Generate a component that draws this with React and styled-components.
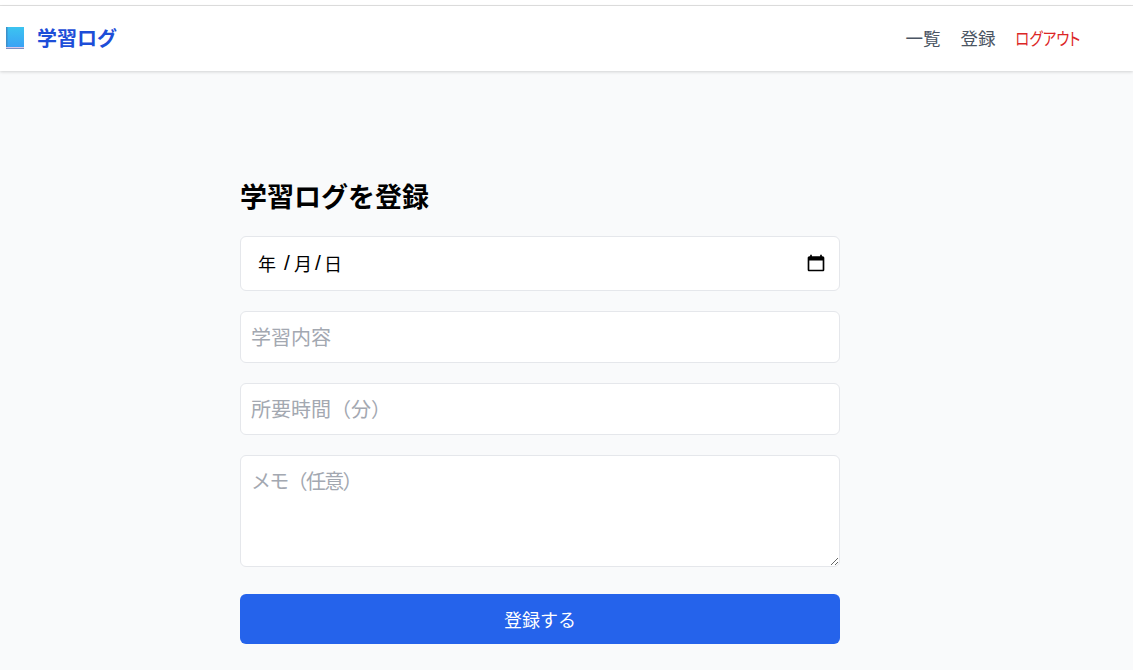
import React from 'react';
import styled, { createGlobalStyle } from 'styled-components';

const FONT = `"Noto Sans CJK JP", "Noto Sans", sans-serif`;

const GlobalStyle = createGlobalStyle`
  html, body {
    margin: 0;
    padding: 0;
    background-color: #f9fafb;
    font-family: ${FONT};
  }
  * {
    box-sizing: border-box;
  }
`;

const Page = styled.div`
  width: 1133px;
  height: 670px;
  overflow: hidden;
  display: flex;
  flex-direction: column;
  background-color: #f9fafb;
`;

const TopStrip = styled.div`
  height: 6px;
  flex-shrink: 0;
  background-color: #fff;
  border-bottom: 1px solid #e2e2e2;
`;

const Header = styled.header`
  height: 65px;
  flex-shrink: 0;
  display: flex;
  align-items: center;
  justify-content: space-between;
  padding: 0 53px 0 6px;
  background-color: #fff;
  box-shadow: 0 1px 3px rgba(0, 0, 0, 0.16);
`;

const Brand = styled.div`
  display: flex;
  align-items: center;
  gap: 13px;
  margin-top: -2px;
  font-size: 20px;
  font-weight: 700;
  line-height: 28px;
  color: #1d4ed8;
`;

const Nav = styled.nav`
  display: flex;
  align-items: center;
  gap: 20px;
  margin-top: -2px;
`;

const NavLink = styled.a`
  font-size: 17.5px;
  line-height: 24px;
  color: #4b5563;
`;

/* the katakana sit much tighter in the reference font, so squeeze this one */
const LogoutLink = styled(NavLink)`
  display: inline-block;
  margin-left: -14px;
  color: #dc2626;
  font-feature-settings: "palt";
  transform: scaleX(0.83);
  transform-origin: right center;
`;

const Content = styled.div`
  padding-right: 53px;
`;

const Main = styled.main`
  width: 600px;
  margin: 0 auto;
  padding-top: 105px;
  display: flex;
  flex-direction: column;
`;

const Title = styled.h1`
  margin: 0 0 20px;
  font-size: 27px;
  line-height: 40px;
  font-weight: 700;
  color: #000;
`;

const Form = styled.form`
  display: flex;
  flex-direction: column;
  gap: 20px;
`;

const DateField = styled.div`
  height: 55px;
  display: flex;
  align-items: center;
  justify-content: space-between;
  padding: 0 13px 2px 17px;
  background-color: #fff;
  border: 1px solid #e5e7eb;
  border-radius: 6px;
  font-size: 18px;
  color: #000;
`;

const DateParts = styled.div`
  display: flex;
  align-items: center;
`;

const DateSep = styled.span`
  width: ${({ $wide }) => ($wide ? '18px' : '12px')};
  padding-left: ${({ $wide }) => ($wide ? '8px' : '3px')};
  font-family: "Liberation Sans", sans-serif;
  font-size: 21px;
  line-height: 24px;
`;

const TextInput = styled.input`
  height: 52px;
  padding: 0 10px 2px;
  background-color: #fff;
  border: 1px solid #e5e7eb;
  border-radius: 6px;
  outline: none;
  font-family: ${FONT};
  font-size: 20px;
  color: #111;

  &::placeholder {
    color: #a3a8b1;
  }
`;

const TextArea = styled.textarea`
  height: 112px;
  padding: 11px 10px;
  background-color: #fff;
  border: 1px solid #e5e7eb;
  border-radius: 6px;
  outline: none;
  resize: vertical;
  font-family: ${FONT};
  font-size: 20px;
  line-height: 28px;
  color: #111;

  &::placeholder {
    color: #a3a8b1;
    letter-spacing: -1.7px;
  }
`;

const SubmitButton = styled.button`
  height: 50px;
  margin-top: 7px;
  background-color: #2563eb;
  border: none;
  border-radius: 6px;
  color: #fff;
  font-family: ${FONT};
  font-size: 18px;
`;

const BookIcon = () => (
  <svg width="18" height="22" viewBox="0 0 18 22" aria-hidden="true">
    <defs>
      <linearGradient id="bookCover" x1="0" y1="0" x2="0" y2="1">
        <stop offset="0" stopColor="#3cc4f0" />
        <stop offset="1" stopColor="#3aa2f5" />
      </linearGradient>
    </defs>
    <rect x="0" y="0" width="18" height="20" fill="url(#bookCover)" />
    <rect x="0" y="0" width="1.5" height="20" fill="#3d8fc9" />
    <rect x="0" y="20" width="18" height="1" fill="#d9c8ea" />
    <rect x="0" y="21" width="18" height="1" fill="#7f8fc0" />
  </svg>
);

const CalendarIcon = () => (
  <svg width="20" height="20" viewBox="0 0 24 24" aria-hidden="true">
    <path
      fill="#000"
      d="M20 4h-1V2h-2v2H7V2H5v2H4c-1.1 0-2 .9-2 2v14c0 1.1.9 2 2 2h16c1.1 0 2-.9 2-2V6c0-1.1-.9-2-2-2zm0 16H4V9h16v11z"
    />
  </svg>
);

const App = () => (
  <Page>
    <GlobalStyle />
    <TopStrip />
    <Header>
      <Brand>
        <BookIcon />
        <span>学習ログ</span>
      </Brand>
      <Nav>
        <NavLink>一覧</NavLink>
        <NavLink>登録</NavLink>
        <LogoutLink>ログアウト</LogoutLink>
      </Nav>
    </Header>
    <Content>
      <Main>
        <Title>学習ログを登録</Title>
        <Form>
          <DateField>
            <DateParts>
              <span>年</span>
              <DateSep $wide>/</DateSep>
              <span>月</span>
              <DateSep>/</DateSep>
              <span>日</span>
            </DateParts>
            <CalendarIcon />
          </DateField>
          <TextInput type="text" placeholder="学習内容" />
          <TextInput type="text" placeholder="所要時間（分）" />
          <TextArea placeholder="メモ（任意）" />
          <SubmitButton type="button">登録する</SubmitButton>
        </Form>
      </Main>
    </Content>
  </Page>
);

export default App;
